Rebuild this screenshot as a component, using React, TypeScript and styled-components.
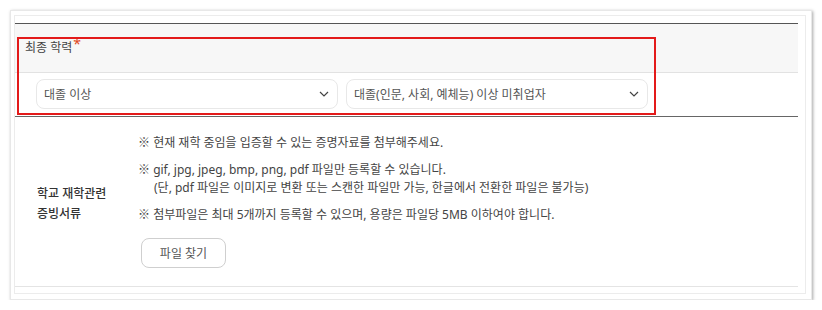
import React from "react";
import styled, { createGlobalStyle } from "styled-components";

const GlobalStyle = createGlobalStyle`
  html, body {
    margin: 0;
    padding: 0;
    background: #ffffff;
  }
  body {
    font-family: "Noto Sans", "Noto Sans CJK KR", sans-serif;
    color: #333;
  }
  * {
    box-sizing: border-box;
  }
`;

const Frame = styled.div`
  margin: 10px 0 0 10px;
  width: 802px;
  height: 290px;
  border: 1px solid #e8e8e8;
  box-shadow: 1px 1px 3px rgba(0, 0, 0, 0.35);
  padding: 4px 5px 5px 3px;
  background: #fff;
`;

const Panel = styled.div`
  height: 100%;
  border: 1px solid #ececec;
  padding: 7px 7px 0 0;
`;

const Table = styled.div`
  position: relative;
  border-top: 1px solid #555;
`;

const LabelRow = styled.div`
  height: 49px;
  background: #f7f7f7;
  border-bottom: 1px solid #e2e2e2;
  padding: 14px 10px 0;
  font-size: 12px;
  line-height: 18px;
  color: #444;
`;

const Required = styled.span`
  color: #e0461a;
  font-size: 14px;
  position: relative;
  top: -3px;
  margin-left: 1px;
`;

const SelectRow = styled.div`
  display: flex;
  gap: 8px;
  height: 44px;
  padding: 6px 0 0 21px;
  border-bottom: 1px solid #666;
`;

const SelectBox = styled.div`
  width: 302px;
  height: 30px;
  border: 1px solid #e8e8e8;
  border-radius: 8px;
  background: #fff;
  display: flex;
  align-items: center;
  justify-content: space-between;
  padding: 0 8px 0 7px;
  font-size: 12px;
  color: #555;
`;

const Highlight = styled.div`
  position: absolute;
  left: 2px;
  top: 13px;
  width: 639px;
  height: 78px;
  border: 2px solid #e31a1a;
  pointer-events: none;
`;

const FileRow = styled.div`
  display: flex;
  border-bottom: 1px solid #e4e4e4;
  height: 170px;
`;

const FileLabel = styled.div`
  width: 123px;
  padding: 4px 0 0 22px;
  display: flex;
  flex-direction: column;
  justify-content: center;
  font-size: 12px;
  line-height: 20px;
  font-weight: 500;
  color: #333;
`;

const FileBody = styled.div`
  padding-top: 16px;
  font-size: 12px;
  line-height: 18px;
  color: #444;
`;

const Note = styled.p`
  margin: 0 0 8px;
`;

const Mark = styled.span`
  font-family: "Noto Sans CJK KR", sans-serif;
`;

const Indent = styled.span`
  display: block;
  padding-left: 16px;
`;

const FindButton = styled.button`
  margin: 6px 0 0 3px;
  width: 85px;
  height: 30px;
  border: 1px solid #cfcfcf;
  border-radius: 8px;
  background: #fff;
  font-family: inherit;
  font-size: 12px;
  color: #555;
`;

const Chevron = () => (
  <svg width="10" height="6" viewBox="0 0 10 6">
    <path d="M1 1l4 4 4-4" fill="none" stroke="#444" strokeWidth="1.2" />
  </svg>
);

export default function App() {
  return (
    <>
      <GlobalStyle />
      <Frame>
        <Panel>
          <Table>
            <LabelRow>
              최종 학력<Required>*</Required>
            </LabelRow>
            <SelectRow>
              <SelectBox>
                대졸 이상
                <Chevron />
              </SelectBox>
              <SelectBox>
                대졸(인문, 사회, 예체능) 이상 미취업자
                <Chevron />
              </SelectBox>
            </SelectRow>
            <FileRow>
              <FileLabel>
                <span>학교 재학관련</span>
                <span>증빙서류</span>
              </FileLabel>
              <FileBody>
                <Note>
                  <Mark>※</Mark> 현재 재학 중임을 입증할 수 있는 증명자료를 첨부해주세요.
                </Note>
                <Note>
                  <Mark>※</Mark> gif, jpg, jpeg, bmp, png, pdf 파일만 등록할 수 있습니다.
                  <Indent>
                    (단, pdf 파일은 이미지로 변환 또는 스캔한 파일만 가능, 한글에서 전환한 파일은 불가능)
                  </Indent>
                </Note>
                <Note>
                  <Mark>※</Mark> 첨부파일은 최대 5개까지 등록할 수 있으며, 용량은 파일당 5MB 이하여야 합니다.
                </Note>
                <FindButton>파일 찾기</FindButton>
              </FileBody>
            </FileRow>
            <Highlight />
          </Table>
        </Panel>
      </Frame>
    </>
  );
}
